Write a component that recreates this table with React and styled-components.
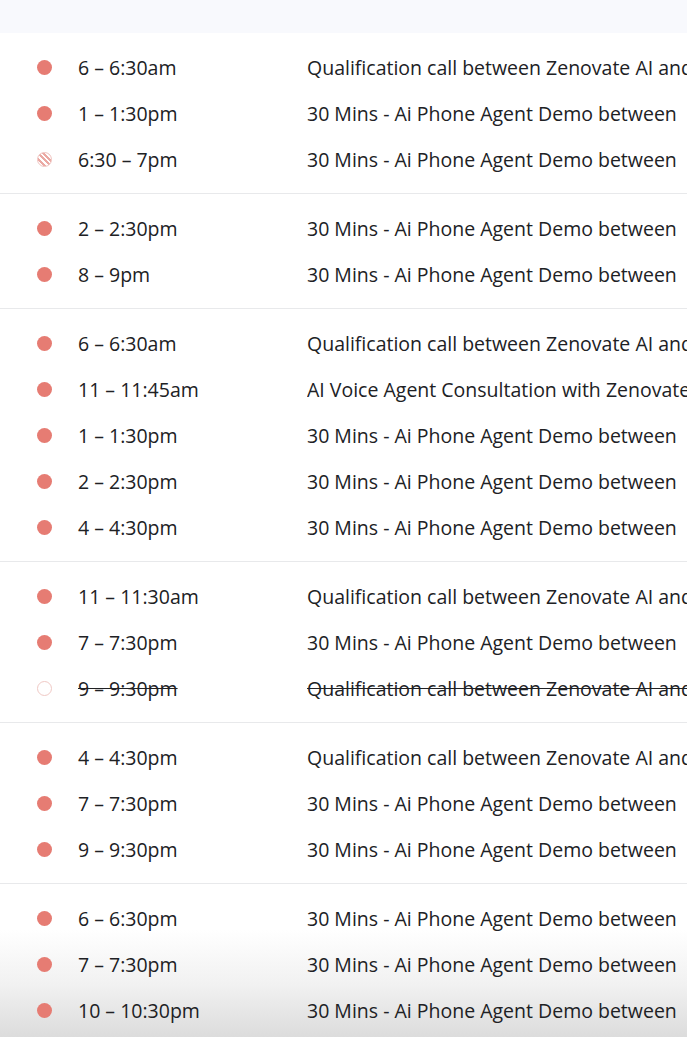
import React from "react";
import styled, { createGlobalStyle, css } from "styled-components";

const Global = createGlobalStyle`
  html, body { margin: 0; padding: 0; background: #ffffff; }
  body { font-family: "Open Sans", Roboto, Arial, sans-serif; color: #202124; overflow: hidden; }
`;

const Page = styled.div`
  width: 687px;
  height: 1037px;
  overflow: hidden;
  background: linear-gradient(
    to bottom,
    #ffffff 0,
    #ffffff 930px,
    #f1f1f1 985px,
    #dcdcdc 1037px
  );
`;

const TopBand = styled.div`
  height: 33px;
  background: #f8f9fd;
`;

const Group = styled.section`
  padding: 11px 0;
  border-bottom: 1px solid #e8e9eb;
`;

const Row = styled.div`
  display: grid;
  grid-template-columns: 78px 229px 1fr;
  align-items: center;
  height: 46px;
  font-size: 19.5px;
  white-space: nowrap;
  overflow: hidden;
`;

const DotCell = styled.div`
  display: flex;
  padding-left: 37px;
`;

const Dot = styled.span`
  width: 15px;
  height: 15px;
  border-radius: 50%;
  box-sizing: border-box;
  ${({ $kind }) =>
    $kind === "hatched"
      ? css`
          border: 1px solid #f0c4c0;
          background: repeating-linear-gradient(
            45deg,
            #eba9a3 0 2px,
            #ffffff 2px 4px
          );
        `
      : $kind === "hollow"
      ? css`
          border: 1.5px solid #f0c9c5;
          background: #fff;
        `
      : css`
          background: #e67c73;
        `}
`;

const Time = styled.span`
  color: #202124;
  text-decoration: ${({ $cancelled }) => ($cancelled ? "line-through" : "none")};
`;

const Title = styled.span`
  color: #202124;
  overflow: hidden;
  text-decoration: ${({ $cancelled }) => ($cancelled ? "line-through" : "none")};
`;

const Q = "Qualification call between Zenovate AI and";
const D = "30 Mins - Ai Phone Agent Demo between";
const V = "AI Voice Agent Consultation with Zenovate";

const groups = [
  [
    ["6 – 6:30am", Q],
    ["1 – 1:30pm", D],
    ["6:30 – 7pm", D, "hatched"],
  ],
  [
    ["2 – 2:30pm", D],
    ["8 – 9pm", D],
  ],
  [
    ["6 – 6:30am", Q],
    ["11 – 11:45am", V],
    ["1 – 1:30pm", D],
    ["2 – 2:30pm", D],
    ["4 – 4:30pm", D],
  ],
  [
    ["11 – 11:30am", Q],
    ["7 – 7:30pm", D],
    ["9 – 9:30pm", Q, "hollow"],
  ],
  [
    ["4 – 4:30pm", Q],
    ["7 – 7:30pm", D],
    ["9 – 9:30pm", D],
  ],
  [
    ["6 – 6:30pm", D],
    ["7 – 7:30pm", D],
    ["10 – 10:30pm", D],
  ],
];

export default function App() {
  return (
    <Page>
      <Global />
      <TopBand />
      {groups.map((rows, gi) => (
        <Group key={gi}>
          {rows.map(([time, title, kind], ri) => (
            <Row key={ri}>
              <DotCell>
                <Dot $kind={kind} />
              </DotCell>
              <Time $cancelled={kind === "hollow"}>{time}</Time>
              <Title $cancelled={kind === "hollow"}>{title}</Title>
            </Row>
          ))}
        </Group>
      ))}
    </Page>
  );
}
